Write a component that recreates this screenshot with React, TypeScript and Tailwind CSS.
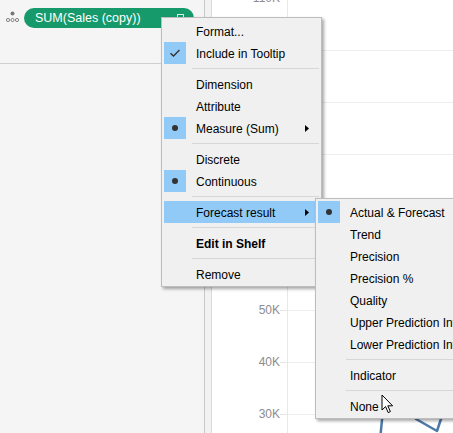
import React from "react";

type Mark = "check" | "dot" | undefined;

function MenuRow({ label, mark, hot, arrow, bold }: { label: string; mark?: Mark; hot?: boolean; arrow?: boolean; bold?: boolean }) {
  return (
    <div className={`flex h-[22px] items-center whitespace-nowrap ${hot ? "bg-[#91c9f7]" : ""}`}>
      <div className={`flex h-[22px] w-[22px] shrink-0 items-center justify-center ${mark ? "bg-[#91c9f7]" : ""}`}>
        {mark === "check" && (
          <svg width="12" height="10" viewBox="0 0 12 10">
            <path d="M1.5 5.2 L4.5 8 L10.5 2" fill="none" stroke="#333" strokeWidth="1.4" />
          </svg>
        )}
        {mark === "dot" && <div className="h-[6px] w-[6px] rounded-full bg-[#333]" />}
      </div>
      <span className={`ml-[10px] flex-1 translate-y-[1px] text-[12px] text-black ${bold ? "font-bold" : ""}`}>{label}</span>
      {arrow && (
        <svg width="4" height="7" viewBox="0 0 4 7" className="mr-[10px] shrink-0">
          <path d="M0 0 L4 3.5 L0 7 Z" fill="#000" />
        </svg>
      )}
    </div>
  );
}

function Sep() {
  return (
    <div className="flex h-[9px] items-center pl-[28px]">
      <div className="h-px w-full bg-[#d7d7d7]" />
    </div>
  );
}

const ticks = ["110K", "100K", "90K", "80K", "70K", "60K", "50K", "40K", "30K", "20K"];

export default function App() {
  return (
    <div
      className="relative flex h-[433px] w-[453px] overflow-hidden bg-white"
      style={{ fontFamily: '"Liberation Sans", Arial, sans-serif' }}
    >
      {/* Left shelf panel */}
      <div className="w-[205px] shrink-0 border-r border-[#c8c8c8] bg-[#f5f5f5]">
        <div className="h-[64px] border-b border-[#cfcfcf]">
          <div className="flex items-center pl-[6px] pt-[8px]">
            <svg width="15" height="14" viewBox="0 0 15 14" className="mr-[3px]">
              <circle cx="6.5" cy="2.5" r="2" fill="#777" />
              <circle cx="2" cy="9" r="1.6" fill="none" stroke="#777" strokeWidth="0.9" />
              <circle cx="6.5" cy="9" r="1.6" fill="none" stroke="#777" strokeWidth="0.9" />
              <circle cx="11" cy="9" r="1.6" fill="none" stroke="#777" strokeWidth="0.9" />
            </svg>
            <div className="flex h-[20px] w-[170px] items-center rounded-full bg-[#16996b] pl-[11px] pr-[10px]">
              <span className="flex-1 whitespace-nowrap text-[12.5px] text-white">SUM(Sales (copy))</span>
              <svg width="7" height="8" viewBox="0 0 7 8">
                <rect x="0.5" y="0.5" width="6" height="5" fill="none" stroke="#d8efe5" strokeWidth="1" />
              </svg>
            </div>
          </div>
        </div>
      </div>
      <div className="w-[7px] shrink-0 border-r border-[#d9d9d9] bg-[#f2f2f2]" />

      {/* Chart area */}
      <div className="relative flex-1 overflow-hidden bg-white">
        <div className="-mt-[28px] flex flex-col">
          {ticks.map((t) => (
            <div key={t} className="flex h-[52px] items-center">
              <span className="w-[68px] text-right text-[12px] text-[#8c8c8c]">{t}</span>
              <div className="h-px w-[7px] bg-[#e6e6e6]" />
              <div className="flex flex-1 items-center self-stretch border-l border-[#e8e8e8]">
                <div className="h-px w-full bg-[#ededed]" />
              </div>
            </div>
          ))}
        </div>
        <svg className="absolute left-0 top-0" width="241" height="433" viewBox="212 0 241 433">
          <polyline points="380,440 384,400" fill="none" stroke="#4e79a7" strokeWidth="2.5" />
          <polyline points="400,400 416,419 437,431 444,410" fill="none" stroke="#4e79a7" strokeWidth="2.5" strokeLinejoin="round" />
        </svg>
      </div>

      {/* Context menu */}
      <div className="absolute left-[161px] top-[17px] w-[161px] border border-[#bdbdbd] bg-[#f0f0f0] px-[2px] pb-[1px] pt-[2px] shadow-[2px_2px_3px_rgba(0,0,0,0.35)]">
        <MenuRow label="Format..." />
        <MenuRow label="Include in Tooltip" mark="check" />
        <Sep />
        <MenuRow label="Dimension" />
        <MenuRow label="Attribute" />
        <MenuRow label="Measure (Sum)" mark="dot" arrow />
        <Sep />
        <MenuRow label="Discrete" />
        <MenuRow label="Continuous" mark="dot" />
        <Sep />
        <MenuRow label="Forecast result" hot arrow />
        <Sep />
        <MenuRow label="Edit in Shelf" bold />
        <Sep />
        <MenuRow label="Remove" />
      </div>

      {/* Submenu */}
      <div className="absolute left-[315px] top-[198px] w-[190px] border border-[#bdbdbd] bg-[#f0f0f0] px-[2px] pb-[1px] pt-[2px] shadow-[2px_2px_3px_rgba(0,0,0,0.35)]">
        <MenuRow label="Actual & Forecast" mark="dot" />
        <MenuRow label="Trend" />
        <MenuRow label="Precision" />
        <MenuRow label="Precision %" />
        <MenuRow label="Quality" />
        <MenuRow label="Upper Prediction Interval" />
        <MenuRow label="Lower Prediction Interval" />
        <Sep />
        <MenuRow label="Indicator" />
        <Sep />
        <MenuRow label="None" />
      </div>

      {/* Mouse pointer */}
      <svg className="absolute left-[381px] top-[394px]" width="13" height="21" viewBox="0 0 13 21">
        <path d="M1 1 L1 16 L4.6 12.6 L7.2 18.6 L9.4 17.6 L6.8 11.8 L11.6 11.8 Z" fill="#fff" stroke="#000" strokeWidth="1" strokeLinejoin="round" />
      </svg>
    </div>
  );
}
